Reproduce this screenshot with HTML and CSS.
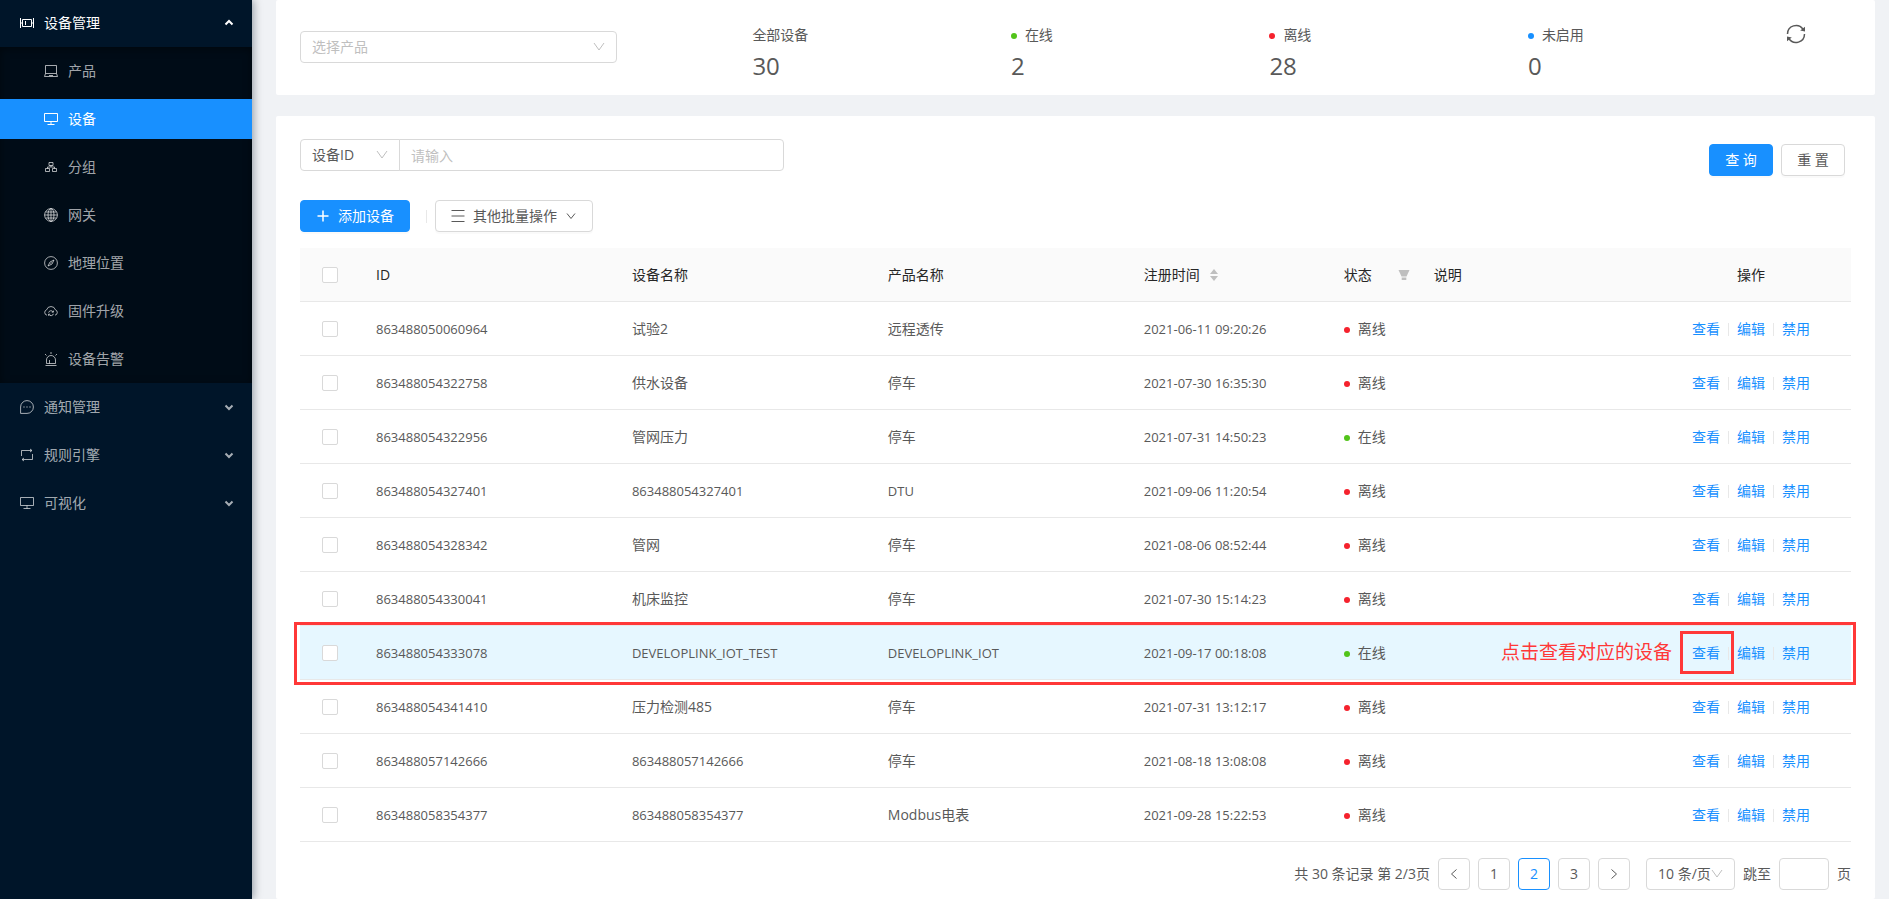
FILE: index.html
```html
<!DOCTYPE html>
<html lang="zh-CN">
<head>
  <meta charset="UTF-8" />
  <meta name="viewport" content="width=device-width, initial-scale=1.0" />
  <title>设备管理</title>
  <link rel="stylesheet" href="styles.css">
</head>
<body>
  <div class="layout">
    <nav class="sidebar">
      <a class="menu-title open" href="#">
        <svg class="icon" viewBox="0 0 14 14"><path d="M.5 2v10M13.5 2v10M2.500 3.500h9v7h-9zM.5 7h2M11.500 7h2M5.500 5v4" /></svg>
        <span>设备管理</span>
        <svg class="arrow" viewBox="0 0 10 10"><path d="M1.500 6.500 5 3l3.500 3.500" /></svg>
      </a>
      <div class="submenu">
        <a href="#">
          <svg class="icon" viewBox="0 0 14 14"><path d="M1.500 1.500h11v8h-11zM1.500 9.500.5 12.500h13l-1-3M5 11.500h4" /></svg>
          <span>产品</span>
        </a>
        <a class="selected" href="#">
          <svg class="icon" viewBox="0 0 14 14"><path d="M.5 1.500h13v8H.5zM7 9.500v3M3.500 12.500h7" /></svg>
          <span>设备</span>
        </a>
        <a href="#">
          <svg class="icon" viewBox="0 0 14 14"><path d="M5 2.500h4v3H5zM1.500 8.500h4v3h-4zM8.500 8.500h4v3h-4zM7 5.500V7M3.500 8.500V7h7v1.500" /></svg>
          <span>分组</span>
        </a>
        <a href="#">
          <svg class="icon" viewBox="0 0 14 14"><circle cx="7" cy="7" r="6.400" /><ellipse cx="7" cy="7" rx="3" ry="6.400" /><path d="M7 .6v12.800M.6 7h12.800M1.500 4h11M1.500 10h11" /></svg>
          <span>网关</span>
        </a>
        <a href="#">
          <svg class="icon" viewBox="0 0 14 14"><circle cx="7" cy="7" r="6.400" /><path d="M10 4 8 8 4 10l2-4zM6.500 7.500l1-1" /></svg>
          <span>地理位置</span>
        </a>
        <a href="#">
          <svg class="icon" viewBox="0 0 14 14"><path d="M3 11.200A2.800 2.800 0 0 1 2.600 5.800a4.600 4.600 0 0 1 8.800 0A2.800 2.800 0 0 1 11 11.200M4.600 8.600a2.500 2.500 0 0 1 4.600-.6M9.400 9.800a2.500 2.500 0 0 1-4.600.6M9.400 6.600v1.600H7.800M4.600 11.800v-1.600h1.600" /></svg>
          <span>固件升级</span>
        </a>
        <a href="#">
          <svg class="icon" viewBox="0 0 14 14"><path d="M1.500 13.500h11M2.500 11.500V8a4.500 4.500 0 0 1 9 0v3.500zM7 0v2M1 2l1.500 1.500M13 2l-1.500 1.500M5.500 8v3.500" /></svg>
          <span>设备告警</span>
        </a>
      </div>
      <a class="menu-title" href="#">
        <svg class="icon" viewBox="0 0 14 14"><path d="M.6 13.400V7A6.400 6.400 0 1 1 7 13.400z" /><path d="M3.300 7h1.400M6.300 7h1.400M9.300 7h1.400" /></svg>
        <span>通知管理</span>
        <svg class="arrow" viewBox="0 0 10 10"><path d="M1.500 3.500 5 7l3.500-3.500" /></svg>
      </a>
      <a class="menu-title" href="#">
        <svg class="icon" viewBox="0 0 14 14"><path d="M1.500 8V2.500h10M12.500 6v5.500h-10M10 1l2 1.500L10 4M4 10l-2 1.500L4 13" /></svg>
        <span>规则引擎</span>
        <svg class="arrow" viewBox="0 0 10 10"><path d="M1.500 3.500 5 7l3.500-3.500" /></svg>
      </a>
      <a class="menu-title" href="#">
        <svg class="icon" viewBox="0 0 14 14"><path d="M.5 1.500h13v8H.5zM7 9.500v3M3.500 12.500h7" /></svg>
        <span>可视化</span>
        <svg class="arrow" viewBox="0 0 10 10"><path d="M1.500 3.500 5 7l3.500-3.500" /></svg>
      </a>
    </nav>

    <main class="content">
      <section class="card summary">
        <div>
          <select class="select product-select" aria-label="选择产品">
            <option>选择产品</option>
          </select>
        </div>
        <div class="stat">
          <div class="stat-label">全部设备</div>
          <div class="stat-value">30</div>
        </div>
        <div class="stat">
          <div class="stat-label"><i class="dot online"></i>在线</div>
          <div class="stat-value">2</div>
        </div>
        <div class="stat">
          <div class="stat-label"><i class="dot offline"></i>离线</div>
          <div class="stat-value">28</div>
        </div>
        <div class="stat">
          <div class="stat-label"><i class="dot inactive"></i>未启用</div>
          <div class="stat-value">0</div>
        </div>
        <button class="refresh" type="button" aria-label="刷新">
          <svg viewBox="0 0 20 20"><path d="M1.500 10A8.500 8.500 0 0 1 17 5.200M18.500 10A8.500 8.500 0 0 1 3 14.800" /><path class="fill" d="M19 2.800v4.700l-4.800-.9zM1 17.200v-4.700l4.800.9z" /></svg>
        </button>
      </section>

      <section class="card list">
        <form class="search">
          <div class="search-group">
            <select class="select field-select" aria-label="查询字段">
              <option>设备ID</option>
            </select>
            <input class="input keyword" type="text" placeholder="请输入" aria-label="关键字" />
          </div>
          <div class="search-btns">
            <button class="btn primary spaced" type="button">查 询</button>
            <button class="btn spaced" type="button">重 置</button>
          </div>
        </form>

        <div class="toolbar">
          <button class="btn primary" type="button">
            <svg class="icon bold" viewBox="0 0 14 14"><path d="M7 1.500v11M1.500 7h11" /></svg>
            <span>添加设备</span>
          </button>
          <i class="divider"></i>
          <button class="btn" type="button">
            <svg class="icon" viewBox="0 0 14 14"><path d="M.5 1.500h13M.5 7h13M.5 12.500h13" /></svg>
            <span>其他批量操作</span>
            <svg class="icon small" viewBox="0 0 12 12"><path d="M2 3.500l4 5 4-5" /></svg>
          </button>
        </div>

        <table class="table">
          <colgroup>
            <col class="col-check" />
            <col class="col-text" />
            <col class="col-text" />
            <col class="col-text" />
            <col class="col-time" />
            <col class="col-status" />
            <col />
            <col class="col-action" />
          </colgroup>
          <thead>
            <tr>
              <th class="center"><input type="checkbox" aria-label="全选" /></th>
              <th>ID</th>
              <th>设备名称</th>
              <th>产品名称</th>
              <th>
                <div class="th-flex">注册时间
                  <svg class="sorter" viewBox="0 0 8 14"><path d="M4 1l4 5H0zM4 13l4-5H0z" /></svg>
                </div>
              </th>
              <th>
                <div class="th-flex between">状态
                  <svg class="filter" viewBox="0 0 12 12"><path d="M.5 1h11L8.500 7.500h-5zM3.700 8.500h4.600V11H3.700z" /></svg>
                </div>
              </th>
              <th>说明</th>
              <th class="center">操作</th>
            </tr>
          </thead>
          <tbody id="rows"></tbody>
        </table>

        <div class="pagination">
          <span class="total">共 30 条记录 第 2/3页</span>
          <button class="page" type="button" aria-label="上一页"><svg class="icon small" viewBox="0 0 12 12"><path d="M8.500 1.500 3.500 6l5 4.500" /></svg></button>
          <button class="page" type="button">1</button>
          <button class="page current" type="button">2</button>
          <button class="page" type="button">3</button>
          <button class="page" type="button" aria-label="下一页"><svg class="icon small" viewBox="0 0 12 12"><path d="M3.500 1.500l5 4.500-5 4.500" /></svg></button>
          <select class="select size-select" aria-label="每页条数">
            <option>10 条/页</option>
          </select>
          <label for="jump">跳至</label>
          <input class="input jump" id="jump" type="text" />
          <span>页</span>
        </div>
      </section>
    </main>
  </div>

  <script src="script.js"></script>
</body>
</html>
```

FILE: styles.css
```css
* {
  box-sizing: border-box;
}

body {
  margin: 0;
  font-family: "Open Sans", "Noto Sans CJK SC", sans-serif;
  font-size: 14px;
  line-height: 22px;
  color: #595959;
  background: #f0f2f5;
}

button,
input,
select {
  font: inherit;
  color: inherit;
}

a {
  text-decoration: none;
}

.layout {
  display: flex;
  min-height: 100vh;
}

/* sidebar */
.sidebar {
  flex: 0 0 252px;
  padding-top: 3px;
  background: #001529;
  box-shadow: 2px 0 8px rgba(0, 21, 41, 0.35);
}

.sidebar a {
  display: flex;
  align-items: center;
  gap: 10px;
  height: 40px;
  color: rgba(255, 255, 255, 0.65);
}

.menu-title {
  margin-bottom: 8px;
  padding: 0 18px 0 20px;
}

.sidebar .open {
  margin-bottom: 4px;
  color: #fff;
}

.submenu {
  display: flex;
  flex-direction: column;
  gap: 8px;
  margin-bottom: 4px;
  padding: 4px 0;
  background: #000c17;
  box-shadow: inset 0 2px 8px rgba(0, 0, 0, 0.45);
}

.submenu a {
  padding-left: 44px;
}

.sidebar .selected {
  color: #fff;
  background: #1890ff;
}

.icon {
  flex: none;
  width: 14px;
  height: 14px;
  fill: none;
  stroke: currentColor;
  stroke-width: 1;
}

.icon.bold {
  stroke-width: 1.5;
}

.icon.small {
  width: 12px;
  height: 12px;
}

.arrow {
  width: 10px;
  height: 10px;
  margin-left: auto;
  fill: none;
  stroke: currentColor;
  stroke-width: 2;
}

/* content */
.content {
  display: flex;
  flex: 1;
  flex-direction: column;
  gap: 21px;
  min-width: 0;
  padding: 0 14px 0 24px;
}

.card {
  padding: 0 24px;
  background: #fff;
  border-radius: 2px;
}

.summary {
  display: grid;
  grid-template-columns: 7fr 4fr 4fr 4fr 4fr 1fr;
  align-items: start;
  height: 95px;
  padding-top: 24px;
}

.select {
  height: 32px;
  padding: 0 11px;
  border: 1px solid #d9d9d9;
  border-radius: 4px;
  appearance: none;
  background: #fff url("data:image/svg+xml,%3Csvg xmlns='http://www.w3.org/2000/svg' viewBox='0 0 12 12'%3E%3Cpath d='M1 2l5 7 5-7' fill='none' stroke='%23bfbfbf'/%3E%3C/svg%3E") no-repeat right 11px center / 12px 12px;
}

.product-select {
  width: 70%;
  margin-top: 7px;
  color: #bfbfbf;
}

.stat-value {
  margin-top: 4px;
  font-size: 24px;
  line-height: 32px;
}

.dot {
  display: inline-block;
  width: 6px;
  height: 6px;
  margin-right: 8px;
  border-radius: 50%;
  vertical-align: middle;
}

.online {
  background: #52c41a;
}

.offline {
  background: #f5222d;
}

.inactive {
  background: #1890ff;
}

.refresh {
  width: 20px;
  height: 20px;
  padding: 0;
  border: 0;
  background: none;
  cursor: pointer;
}

.refresh svg {
  display: block;
  fill: none;
  stroke: #595959;
  stroke-width: 1.5;
}

.refresh .fill {
  fill: #595959;
  stroke: none;
}

/* search */
.list {
  flex: 1;
  padding-top: 23px;
  padding-bottom: 9px;
}

.search {
  display: flex;
  justify-content: space-between;
}

.search-group {
  display: flex;
  width: 484px;
}

.field-select {
  width: 100px;
  border-radius: 4px 0 0 4px;
}

.input {
  height: 32px;
  padding: 0 11px;
  border: 1px solid #d9d9d9;
  border-radius: 4px;
}

.input::placeholder {
  color: #bfbfbf;
}

.keyword {
  flex: 1;
  min-width: 0;
  margin-left: -1px;
  border-radius: 0 4px 4px 0;
}

.search-btns {
  display: flex;
  gap: 8px;
  padding: 5px 6px 0 0;
}

.btn {
  display: flex;
  align-items: center;
  justify-content: center;
  gap: 8px;
  height: 32px;
  padding: 0 15px;
  border: 1px solid #d9d9d9;
  border-radius: 4px;
  background: #fff;
  box-shadow: 0 2px 0 rgba(0, 0, 0, 0.02);
  cursor: pointer;
}

.btn.primary {
  color: #fff;
  border-color: #1890ff;
  background: #1890ff;
}

.btn.spaced {
  width: 64px;
}

.toolbar {
  display: flex;
  align-items: center;
  margin: 24px 0 16px;
}

.divider {
  display: inline-block;
  width: 1px;
  height: 13px;
  margin: 0 8px;
  background: #e8e8e8;
  vertical-align: middle;
}

.toolbar .divider {
  margin-left: 16px;
}

/* table */
.table {
  width: 100%;
  table-layout: fixed;
  border-collapse: separate;
  border-spacing: 0;
}

.col-check {
  width: 60px;
}

.col-text {
  width: 16.5%;
}

.col-time {
  width: 200px;
}

.col-status {
  width: 90px;
}

.col-action {
  width: 200px;
}

.table th,
.table td {
  height: 54px;
  padding: 0 16px;
  border-bottom: 1px solid #e8e8e8;
  text-align: left;
  white-space: nowrap;
}

.table th {
  font-weight: 400;
  color: #262626;
  background: #fafafa;
}

.table .center {
  text-align: center;
}

.table .latin {
  font-size: 13px;
}

.table input {
  display: block;
  width: 16px;
  height: 16px;
  margin: 0 auto;
  border: 1px solid #d9d9d9;
  border-radius: 2px;
  appearance: none;
  background: #fff;
}

.th-flex {
  display: flex;
  align-items: center;
  gap: 10px;
}

.th-flex.between {
  gap: 26px;
}

.sorter,
.filter {
  flex: none;
  fill: #bfbfbf;
}

.sorter {
  width: 8px;
  height: 14px;
}

.filter {
  width: 12px;
  height: 12px;
}

.table td a {
  color: #1890ff;
}

/* highlighted row and its callouts */
.active {
  position: relative;
}

.active td {
  background: #e6f7ff;
}

.row-mark {
  position: absolute;
  inset: -4px -5px -5px -6px;
  border: 3px solid #ff3838;
  pointer-events: none;
}

.active .marked {
  position: relative;
}

.link-mark {
  position: absolute;
  inset: -12px -14px -12px -12px;
  border: 3px solid #ff3838;
}

.tip {
  position: absolute;
  top: -2px;
  right: 48px;
  font-size: 19px;
  color: #ff3838;
}

/* pagination */
.pagination {
  display: flex;
  align-items: center;
  justify-content: flex-end;
  gap: 8px;
  margin-top: 16px;
}

.page {
  display: flex;
  align-items: center;
  justify-content: center;
  width: 32px;
  height: 32px;
  padding: 0;
  border: 1px solid #d9d9d9;
  border-radius: 4px;
  background: #fff;
  cursor: pointer;
}

.page.current {
  color: #1890ff;
  border-color: #1890ff;
}

.size-select {
  width: 89px;
  margin-left: 8px;
}

.jump {
  width: 50px;
}
```

FILE: script.js
```js
const devices = [
  ['863488050060964', '试验2', '远程透传', '2021-06-11 09:20:26', false],
  ['863488054322758', '供水设备', '停车', '2021-07-30 16:35:30', false],
  ['863488054322956', '管网压力', '停车', '2021-07-31 14:50:23', true],
  ['863488054327401', '863488054327401', 'DTU', '2021-09-06 11:20:54', false],
  ['863488054328342', '管网', '停车', '2021-08-06 08:52:44', false],
  ['863488054330041', '机床监控', '停车', '2021-07-30 15:14:23', false],
  ['863488054333078', 'DEVELOPLINK_IOT_TEST', 'DEVELOPLINK_IOT', '2021-09-17 00:18:08', true],
  ['863488054341410', '压力检测485', '停车', '2021-07-31 13:12:17', false],
  ['863488057142666', '863488057142666', '停车', '2021-08-18 13:08:08', false],
  ['863488058354377', '863488058354377', 'Modbus电表', '2021-09-28 15:22:53', false]
];
const activeId = '863488054333078';

function textCell(text) {
  const latin = /^[\w\-: ]+$/.test(text);
  return `<td${latin ? ' class="latin"' : ''}>${text}</td>`;
}

document.getElementById('rows').innerHTML = devices.map(([id, name, product, time, online]) => {
  const active = id === activeId;
  return `
    <tr${active ? ' class="active"' : ''}>
      <td class="center"><input type="checkbox" aria-label="${id}" /></td>
      ${[id, name, product, time].map(textCell).join('')}
      <td><i class="dot ${online ? 'online' : 'offline'}"></i>${online ? '在线' : '离线'}</td>
      <td></td>
      <td class="center">
        <a href="#"${active ? ' class="marked"' : ''}>查看${active ? '<span class="link-mark"></span><span class="tip">点击查看对应的设备</span>' : ''}</a><i class="divider"></i><a href="#">编辑</a><i class="divider"></i><a href="#">禁用</a>
        ${active ? '<span class="row-mark"></span>' : ''}
      </td>
    </tr>`;
}).join('');
```
